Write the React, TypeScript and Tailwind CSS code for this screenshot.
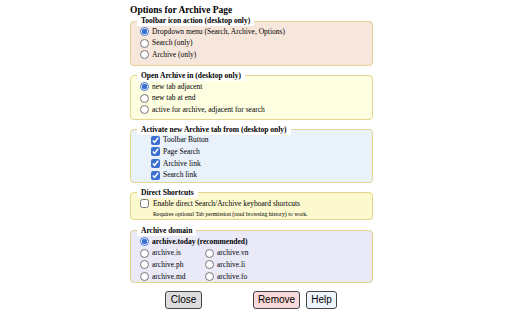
import React from "react";

function Radio({ checked, label, bold }: { checked?: boolean; label: string; bold?: boolean }) {
  return (
    <label className="flex items-center h-[11.6px]">
      <input type="radio" defaultChecked={checked} className="w-[9px] h-[9px] m-0 mr-[3px] accent-[#3b6fd0]" />
      <span className={bold ? "font-bold" : ""}>{label}</span>
    </label>
  );
}

function Check({ label }: { label: string }) {
  return (
    <label className="flex items-center h-[11.6px] pl-[11px]">
      <input type="checkbox" defaultChecked className="w-[9px] h-[9px] m-0 mr-[3px] accent-[#3b6fd0]" />
      <span>{label}</span>
    </label>
  );
}

function Box({ legend, bg, children, pb }: { legend: string; bg: string; children: React.ReactNode; pb: string }) {
  return (
    <fieldset className={`border border-[#e3d58f] rounded-[4px] px-[9px] ${pb} ${bg}`}>
      <legend className="bg-white px-[4px] ml-[-3px] font-bold text-[7.5px] leading-[10px]">{legend}</legend>
      {children}
    </fieldset>
  );
}

export default function App() {
  return (
    <div className="w-[512px] h-[320px] bg-white text-black text-[7.5px] leading-[12px] font-['Liberation_Serif','Times_New_Roman',serif]">
      <div className="ml-[130px] w-[243px] pt-[4px]">
        <div className="font-bold text-[9.5px] leading-[12px]">Options for Archive Page</div>
        <div className="flex flex-col gap-[5px]">
          <Box legend="Toolbar icon action (desktop only)" bg="bg-[#f7e6dc]" pb="pb-[4px]">
            <Radio checked label="Dropdown menu (Search, Archive, Options)" />
            <Radio label="Search (only)" />
            <Radio label="Archive (only)" />
          </Box>
          <Box legend="Open Archive in (desktop only)" bg="bg-[#fefee0]" pb="pb-[3px]">
            <Radio checked label="new tab adjacent" />
            <Radio label="new tab at end" />
            <Radio label="active for archive, adjacent for search" />
          </Box>
          <Box legend="Activate new Archive tab from (desktop only)" bg="bg-[#e9f1fa]" pb="pb-[1px]">
            <Check label="Toolbar Button" />
            <Check label="Page Search" />
            <Check label="Archive link" />
            <Check label="Search link" />
          </Box>
          <Box legend="Direct Shortcuts" bg="bg-[#fdf9cf]" pb="pb-[1px]">
            <label className="flex items-center h-[12px]">
              <input type="checkbox" className="w-[9px] h-[9px] m-0 mr-[4px]" />
              <span>Enable direct Search/Archive keyboard shortcuts</span>
            </label>
            <div className="text-[5.8px] leading-[8px] pl-[13px]">Requires optional Tab permission (read browsing history) to work.</div>
          </Box>
          <div className="mt-[1px] flex flex-col">
            <Box legend="Archive domain" bg="bg-[#e9e9f8]" pb="pb-[0px]">
              <Radio checked bold label="archive.today (recommended)" />
              <div className="grid grid-cols-[65px_1fr]">
                <Radio label="archive.is" />
                <Radio label="archive.vn" />
                <Radio label="archive.ph" />
                <Radio label="archive.li" />
                <Radio label="archive.md" />
                <Radio label="archive.fo" />
              </div>
            </Box>
          </div>
        </div>
      </div>
      <div className="flex mt-[8px] text-[10px] leading-[16px] font-['Liberation_Sans',Arial,sans-serif]">
        <button className="ml-[165px] w-[37px] h-[18px] bg-[#dddddd] border border-[#444] rounded-[3px]">Close</button>
        <button className="ml-[51px] w-[47px] h-[18px] bg-[#f8d8d8] border border-[#444] rounded-[3px]">Remove</button>
        <button className="ml-[6px] w-[31px] h-[18px] bg-[#eef4fb] border border-[#444] rounded-[3px]">Help</button>
      </div>
    </div>
  );
}
